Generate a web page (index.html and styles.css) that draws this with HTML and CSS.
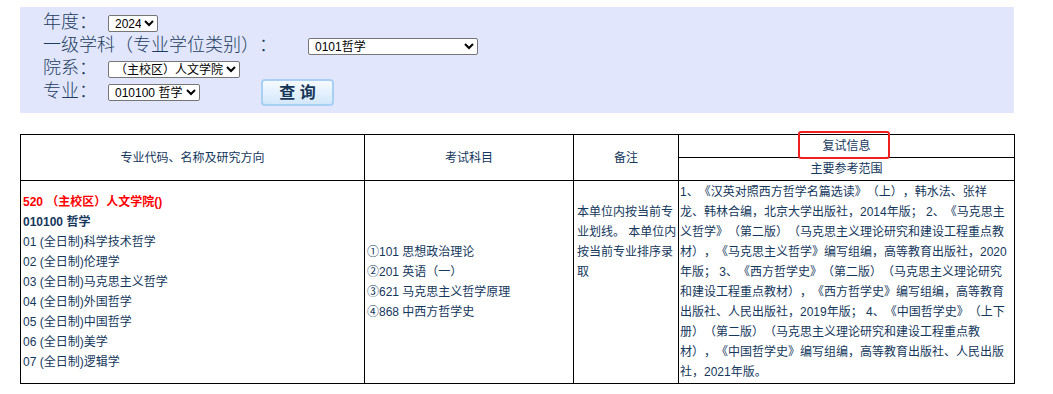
FILE: index.html
```html
<!DOCTYPE html>
<html lang="zh-CN">
<head>
<meta charset="utf-8">
<title>专业目录查询</title>
<link rel="stylesheet" href="styles.css">
</head>
<body>
<div class="page">
  <form class="query">
    <div class="row">
      <span class="lbl">年度：</span>
      <select class="sel sel-year"><option>2024</option></select>
    </div>
    <div class="row">
      <span class="lbl lbl-wide">一级学科（专业学位类别）：</span>
      <select class="sel sel-subject"><option>0101哲学</option></select>
    </div>
    <div class="row">
      <span class="lbl">院系：</span>
      <select class="sel sel-dept"><option>（主校区）人文学院</option></select>
    </div>
    <div class="row row-last">
      <span class="lbl">专业：</span>
      <select class="sel sel-major"><option>010100 哲学</option></select>
      <button type="button" class="btn">查 询</button>
    </div>
  </form>

  <table class="list">
    <colgroup>
      <col class="c1"><col class="c2"><col class="c3"><col class="c4">
    </colgroup>
    <tr>
      <th rowspan="2">专业代码、名称及研究方向</th>
      <th rowspan="2">考试科目</th>
      <th rowspan="2">备注</th>
      <th class="sub"><span class="mark">复试信息</span></th>
    </tr>
    <tr>
      <th class="sub">主要参考范围</th>
    </tr>
    <tr>
      <td class="major">
        <div class="dept">520 （主校区）人文学院()</div>
        <div class="code">010100 哲学</div>
        <div>01 (全日制)科学技术哲学</div>
        <div>02 (全日制)伦理学</div>
        <div>03 (全日制)马克思主义哲学</div>
        <div>04 (全日制)外国哲学</div>
        <div>05 (全日制)中国哲学</div>
        <div>06 (全日制)美学</div>
        <div>07 (全日制)逻辑学</div>
      </td>
      <td class="exam">
        <div>①101 思想政治理论</div>
        <div>②201 英语（一）</div>
        <div>③621 马克思主义哲学原理</div>
        <div>④868 中西方哲学史</div>
      </td>
      <td class="note">本单位内按当前专<br>业划线。 本单位内<br>按当前专业排序录<br>取</td>
      <td class="refs">1、《汉英对照西方哲学名篇选读》（上），韩水法、张祥<br>龙、韩林合编，北京大学出版社，2014年版； 2、《马克思主<br>义哲学》（第二版）（马克思主义理论研究和建设工程重点教<br>材），《马克思主义哲学》编写组编，高等教育出版社，2020<br>年版； 3、《西方哲学史》（第二版）（马克思主义理论研究<br>和建设工程重点教材），《西方哲学史》编写组编，高等教育<br>出版社、人民出版社，2019年版； 4、《中国哲学史》（上下<br>册）（第二版）（马克思主义理论研究和建设工程重点教<br>材），《中国哲学史》编写组编，高等教育出版社、人民出版<br>社，2021年版。</td>
    </tr>
  </table>
</div>
</body>
</html>
```

FILE: styles.css
```css
html, body {
  margin: 0;
  padding: 0;
  background: #ffffff;
}

body {
  font-family: "Liberation Sans", "Noto Sans CJK SC", sans-serif;
  color: #14375c;
  text-spacing-trim: space-all;
}

.page {
  width: 994px;
  padding: 7px 0 0 20px;
}

.query {
  background: #e1e6fc;
  padding: 4px 0 6px 23px;
  height: 96px;
  margin: 0;
}

.row {
  display: flex;
  align-items: baseline;
  height: 23px;
}

.row-last {
  height: 30px;
}

.lbl {
  font-size: 18px;
  line-height: 23px;
  width: 65px;
  color: #1d3d60;
  font-weight: 300;
  white-space: nowrap;
}

.lbl-wide {
  width: 265px;
}

.sel {
  font-family: "Liberation Sans", "Noto Sans CJK SC", sans-serif;
  font-size: 12px;
  height: 17px;
  padding: 0 0 0 2px;
  border: 1px solid #767676;
  border-radius: 2px;
  background: #ffffff;
  color: #000000;
}

.sel-year { width: 50px; }
.sel-subject { width: 170px; }
.sel-dept { width: 132px; }
.sel-major { width: 92px; }

.btn {
  margin-left: 61px;
  width: 73px;
  height: 27px;
  font-family: "Liberation Sans", "Noto Sans CJK SC", sans-serif;
  font-size: 16px;
  font-weight: bold;
  color: #163656;
  background: linear-gradient(#f6faff, #d3e7fb);
  border: 2px solid #a8cff4;
  border-radius: 4px;
  padding: 0;
  line-height: 21px;
  align-self: flex-end;
  margin-bottom: 4px;
}

.list {
  margin-top: 21px;
  width: 994px;
  border-collapse: collapse;
  table-layout: fixed;
  font-size: 12px;
  line-height: 20px;
}

.c1 { width: 344px; }
.c2 { width: 209px; }
.c3 { width: 105px; }
.c4 { width: 336px; }

.list th,
.list td {
  border: 1px solid #000000;
}

.list th {
  font-weight: normal;
  line-height: 22px;
  padding: 0;
  text-align: center;
}

.list td {
  vertical-align: middle;
}

.major {
  padding: 0 2px;
}

.dept {
  color: #ff0000;
  font-weight: bold;
}

.code {
  font-weight: bold;
}

.exam {
  padding: 0 2px;
}

.note {
  padding: 21px 0 0 3px;
  vertical-align: top !important;
  white-space: nowrap;
}

.refs {
  padding: 1px 0 1px 1px;
  white-space: nowrap;
}

.mark {
  position: relative;
  display: inline-block;
}

.mark::after {
  content: "";
  position: absolute;
  left: -24px;
  right: -19px;
  top: -4px;
  bottom: -2px;
  border: 2px solid #f02020;
  border-radius: 3px;
}
```
